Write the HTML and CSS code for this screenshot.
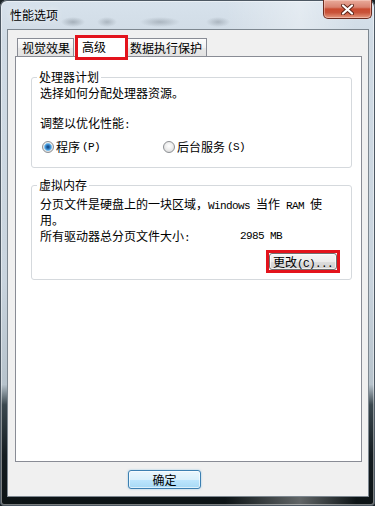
FILE: index.html
```html
<!DOCTYPE html>
<html lang="zh-CN">
<head>
<meta charset="utf-8">
<title>性能选项</title>
<link rel="stylesheet" href="styles.css">
</head>
<body>
<div class="window">
  <div class="titlebar">
    <span class="title">性能选项</span>
    <button class="close" aria-label="关闭">
      <svg width="13" height="11" viewBox="0 0 13 11">
        <path d="M2 1.5 L11 9.5 M11 1.5 L2 9.5" stroke="#5a2216" stroke-width="4" stroke-linecap="round"/>
        <path d="M2 1.5 L11 9.5 M11 1.5 L2 9.5" stroke="#ffffff" stroke-width="2.2" stroke-linecap="round"/>
      </svg>
    </button>
  </div>
  <div class="client">
    <div class="tabs">
      <div class="tab tab-first">视觉效果</div>
      <div class="tab tab-selected marked">高级</div>
      <div class="tab tab-last">数据执行保护</div>
    </div>
    <div class="panel">
      <fieldset class="group group-cpu">
        <legend>处理器计划</legend>
        <p class="line">选择如何分配处理器资源。</p>
        <p class="line line-adjust">调整以优化性能<span class="m">:</span></p>
        <div class="radios">
          <label class="radio-item radio-first"><span class="radio radio-checked"></span>程序<span class="m key">(P)</span></label>
          <label class="radio-item"><span class="radio"></span>后台服务<span class="m key">(S)</span></label>
        </div>
      </fieldset>
      <fieldset class="group group-mem">
        <legend>虚拟内存</legend>
        <p class="desc"><span>分页文件是硬盘上的一块区域，</span><span class="m">Windows </span><span>当作</span><span class="m"> RAM </span><span>使</span><br><span>用。</span></p>
        <div class="size-row">
          <span class="size-label">所有驱动器总分页文件大小<span class="m">:</span></span>
          <span class="m">2985 MB</span>
        </div>
        <div class="btn-row">
          <button class="btn btn-change marked">更改<span class="m">(C)...</span></button>
        </div>
      </fieldset>
    </div>
    <div class="footer">
      <button class="btn btn-default">确定</button>
    </div>
  </div>
</div>
</body>
</html>
```
FILE: styles.css
```css
html, body {
  margin: 0;
  padding: 0;
  background: #1a2226;
}

body {
  font-family: "Noto Sans CJK SC", "Noto Sans", sans-serif;
  font-size: 12px;
  color: #000;
}

.window {
  width: 375px;
  height: 506px;
  box-sizing: border-box;
  display: flex;
  flex-direction: column;
  padding: 0 6px 9px 7px;
  border-radius: 7px 7px 4px 4px;
  box-shadow: inset 0 0 0 1px #4d5863, inset 0 0 0 2px rgba(255,255,255,0.45);
  background:
    radial-gradient(ellipse 12px 5px at 73px 22px, rgba(80,90,100,0.35), transparent),
    radial-gradient(ellipse 10px 5px at 107px 22px, rgba(80,90,100,0.3), transparent),
    radial-gradient(ellipse 20px 5px at 160px 22px, rgba(80,90,100,0.3), transparent),
    radial-gradient(ellipse 12px 5px at 218px 22px, rgba(80,90,100,0.3), transparent),
    linear-gradient(90deg, rgba(255,255,255,0) 60%, rgba(255,255,255,0.35) 80%, rgba(255,255,255,0) 95%),
    linear-gradient(180deg, #d7e2ec 0, #d0dbe5 40px, #c9d4de 55%, #b7c3cc 76%, #3a474e 80%, #141c20 90%, #0c1315 100%);
}

.titlebar {
  height: 29px;
  flex: none;
  display: flex;
  justify-content: space-between;
  align-items: flex-start;
  padding-left: 3px;
  margin-right: -3px;
}

.title {
  margin-top: 8px;
  line-height: 14px;
  text-shadow: 0 0 6px rgba(255,255,255,0.9);
}

.close {
  width: 49px;
  height: 19px;
  padding: 0;
  border: 1px solid #6b2c20;
  border-top: 0;
  border-radius: 0 0 5px 5px;
  display: flex;
  align-items: center;
  justify-content: center;
  background: linear-gradient(180deg, #e9ab9b 0, #d98371 40%, #c94b30 50%, #c9543a 70%, #e59a80 100%);
  box-shadow: inset 0 0 0 1px rgba(255,220,210,0.45);
}

.client {
  flex: 1;
  box-sizing: border-box;
  background: #f0f0f0;
  border: 1px solid #7d8790;
  padding: 6px 6px 0 7px;
}

.tabs {
  height: 21px;
  margin-bottom: -1px;
  padding-left: 2px;
  display: flex;
  align-items: flex-end;
  position: relative;
  z-index: 1;
}

.tab {
  box-sizing: border-box;
  height: 18px;
  margin-bottom: 1px;
  line-height: 17px;
  border: 1px solid #898c95;
  border-bottom: 0;
  background: linear-gradient(180deg, #fdfdfd 0, #f1f1f1 50%, #e8e8e8 50%, #e2e2e2 100%);
  white-space: nowrap;
}

.tab-first {
  padding: 0 3px 0 4px;
}

.tab-selected {
  height: 21px;
  margin-bottom: 0;
  margin-left: 1px;
  padding: 1px 20px 0 6px;
  background: #fff;
  position: relative;
}

.tab-last {
  padding: 0 4px 0 2px;
}

.marked {
  position: relative;
}

.marked::after {
  content: "";
  position: absolute;
  left: -1px;
  top: -2px;
  right: -2px;
  bottom: -3px;
  border: 3px solid #e3131c;
  pointer-events: none;
}

.btn-change.marked::after {
  left: -4px;
  top: -4px;
  right: -4px;
  bottom: -4px;
}

.panel {
  height: 406px;
  box-sizing: border-box;
  background: #fff;
  border: 1px solid #898c95;
  padding: 13px 9px 0 15px;
}

.group {
  margin: 0;
  border: 1px solid #d5d9dd;
  border-radius: 3px;
  padding: 2px 14px 13px 8px;
  min-inline-size: 0;
}

.group legend {
  padding: 0 2px;
  margin-left: -3px;
  line-height: 14px;
}

.line {
  margin: 0;
  line-height: 14px;
}

.line-adjust {
  margin-top: 16px;
}

.m {
  font-family: "Liberation Mono", "DejaVu Sans Mono", monospace;
  font-size: 11px;
  letter-spacing: -0.6px;
}

.key {
  margin-left: 2px;
}

.radios {
  margin-top: 8px;
  display: flex;
  line-height: 14px;
}

.radio-item {
  display: inline-flex;
  align-items: center;
}

.radio-first {
  width: 121px;
}

.radio {
  box-sizing: border-box;
  width: 12px;
  height: 12px;
  margin: 0 2px;
  border: 1px solid #8d9094;
  border-radius: 50%;
  background: radial-gradient(circle at 50% 40%, #ffffff 0, #eeeeee 45%, #d2d2d2 100%);
}

.radio-checked {
  background:
    radial-gradient(circle at 50% 50%, #0f3d70 0, #2267ac 1.5px, #4fa0de 3px, #9bd0f2 3.8px, rgba(255,255,255,0) 4.3px),
    radial-gradient(circle at 50% 40%, #ffffff 0, #eeeeee 45%, #d2d2d2 100%);
}

.group-mem {
  margin-top: 10px;
  padding: 5px 14px 9px 8px;
}

.desc {
  margin: 0;
  line-height: 13px;
  white-space: nowrap;
}

.size-row {
  margin-top: 3px;
  display: flex;
  line-height: 14px;
}

.size-label {
  width: 200px;
}

.btn-row {
  margin-top: 8px;
  display: flex;
  justify-content: flex-end;
}

.btn {
  font-family: inherit;
  font-size: 12px;
  color: #000;
  padding: 0;
  margin: 0;
  box-sizing: border-box;
  border-radius: 3px;
  white-space: nowrap;
}

.btn-change {
  width: 68px;
  height: 17px;
  line-height: 15px;
  border: 1px solid #707070;
  background: linear-gradient(180deg, #f4f4f4 0, #ececec 50%, #dedede 50%, #d0d0d0 100%);
  box-shadow: inset 0 0 0 1px rgba(255,255,255,0.7);
}

.footer {
  margin-top: 8px;
  padding-left: 113px;
}

.btn-default {
  width: 73px;
  height: 19px;
  line-height: 17px;
  border: 1px solid #3c7fb1;
  background: linear-gradient(180deg, #eaf6fd 0, #d9f0fc 50%, #bee6fd 50%, #a7d9f5 100%);
  box-shadow: inset 0 0 0 1px rgba(255,255,255,0.6), 0 0 2px rgba(60,160,220,0.5);
}
```
